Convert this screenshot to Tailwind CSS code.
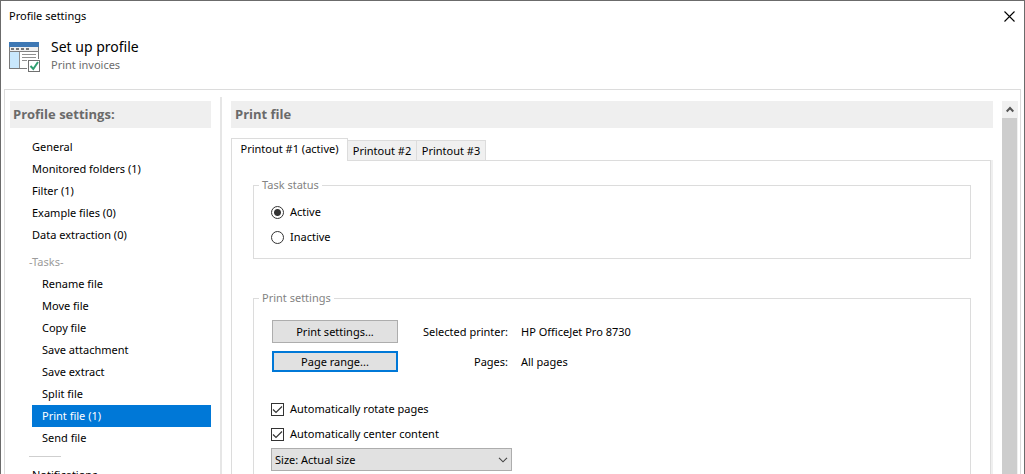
<!DOCTYPE html>
<html lang="en">
<head>
<meta charset="utf-8">
<title>Profile settings</title>
<script src="https://cdn.jsdelivr.net/npm/@tailwindcss/browser@4"></script>
</head>
<body class="h-screen overflow-hidden bg-white font-['Noto_Sans','Open_Sans',sans-serif] text-[11px] leading-4 text-black">
<div class="flex h-full flex-col overflow-hidden border-x border-t border-[#6b6b6b]">
  <header class="shrink-0 pl-2">
    <div class="flex h-[30px] items-center justify-between pr-[5px]">
      <h1>Profile settings</h1>
      <button type="button" aria-label="Close" class="flex h-7 w-5 items-center justify-center">
        <svg class="size-[11px]" viewBox="0 0 11 11" fill="none" stroke="#000" stroke-width="1.1"><path d="M.5.5l10 10M10.5.5l-10 10"/></svg>
      </button>
    </div>
    <div class="flex h-[58px] gap-[10px] pt-[6px]">
      <svg class="mt-[5px] h-[31px] w-8 shrink-0" viewBox="0 0 32 31">
        <rect x=".5" y=".5" width="29" height="26" fill="#fff" stroke="#7a7a7a"/>
        <path fill="#f0f0f0" d="M1 5h28v4H1z"/>
        <path fill="#3e78b4" d="M0 0h30v5H0z"/>
        <path fill="#787878" d="M2 6h3v2H2zM7 6h3v2H7zM12 6h3v2h-3zM17 6h3v2h-3z"/>
        <path fill="#808080" d="M0 9h30v1H0z"/>
        <path fill="#c9e8fd" d="M1 10h9v16H1z"/>
        <path fill="#909090" d="M10 10h1v16h-1zM13 12h14v1H13zM13 15h14v1H13zM13 18h13v1H13z"/>
        <path fill="#fff" d="M18 17h14v14H18z"/>
        <rect x="19.500" y="18.500" width="11" height="11" fill="#fff" stroke="#707070"/>
        <path d="M21.500 24l2.800 3 4.700-7" fill="none" stroke="#2f9e70" stroke-width="2"/>
      </svg>
      <div>
        <h2 class="text-[14px] leading-5">Set up profile</h2>
        <p class="text-[#6d6d6d]">Print invoices</p>
      </div>
    </div>
  </header>

  <div class="mx-[3px] flex min-h-0 flex-1 border-x border-t border-[#dcdcdc] pt-[11px]">
    <nav aria-label="Profile settings" class="ml-[5px] w-[201px] shrink-0">
      <h2 class="mb-2 bg-[#efefef] px-[3px] py-[5px] font-['Open_Sans'] text-[13px] leading-[17px] font-bold text-[#6a6a6a]">Profile settings:</h2>
      <ul class="ml-[22px] leading-[22px]">
        <li><a href="#general" class="block">General</a></li>
        <li><a href="#folders" class="block">Monitored folders (1)</a></li>
        <li><a href="#filter" class="block">Filter (1)</a></li>
        <li><a href="#examples" class="block">Example files (0)</a></li>
        <li><a href="#extraction" class="block">Data extraction (0)</a></li>
        <li class="-ml-[3px] pt-[5px] text-[#9b9b9b]">-Tasks-</li>
        <li><a href="#rename" class="block pl-[10px]">Rename file</a></li>
        <li><a href="#move" class="block pl-[10px]">Move file</a></li>
        <li><a href="#copy" class="block pl-[10px]">Copy file</a></li>
        <li><a href="#attachment" class="block pl-[10px]">Save attachment</a></li>
        <li><a href="#extract" class="block pl-[10px]">Save extract</a></li>
        <li><a href="#split" class="block pl-[10px]">Split file</a></li>
        <li><a href="#print" aria-current="page" class="block bg-[#0078d7] pl-[10px] text-white">Print file (1)</a></li>
        <li><a href="#send" class="block pl-[10px]">Send file</a></li>
        <li aria-hidden="true" class="mt-[7px] mb-[7px] -ml-[3px] h-px w-8 bg-[#cfcfcf]"></li>
        <li><a href="#notifications" class="block">Notifications</a></li>
      </ul>
    </nav>
    <div class="-mt-1 ml-[9px] w-[2px] shrink-0 bg-[#e6e6e6]"></div>

    <main class="ml-[9px] flex min-w-0 flex-1 flex-col">
      <h2 class="shrink-0 bg-[#efefef] px-1 py-[5px] font-['Open_Sans'] text-[13px] leading-[17px] font-bold text-[#6a6a6a]">Print file</h2>
      <div role="tablist" class="mt-[10px] -mb-px flex shrink-0 items-end">
        <button type="button" role="tab" aria-selected="true" class="z-10 h-[23px] w-[117px] border border-b-0 border-[#dcdcdc] bg-white pb-[2px]">Printout #1 (active)</button>
        <button type="button" role="tab" aria-selected="false" class="h-[21px] w-[69px] border border-l-0 border-[#dcdcdc] bg-[#f0f0f0]">Printout #2</button>
        <button type="button" role="tab" aria-selected="false" class="h-[21px] w-[69px] border border-l-0 border-[#dcdcdc] bg-[#f0f0f0]">Printout #3</button>
      </div>
      <div class="flex min-h-0 flex-1 border-r-2 border-[#efefef]">
        <div class="min-w-0 flex-1 border-x border-t border-[#dcdcdc] pt-4 pr-[19px] pl-[21px]">
          <fieldset class="h-[82px] border border-[#dcdcdc] px-[17px]">
            <legend class="-ml-[12px] px-[3px] leading-4 text-[#838383]">Task status</legend>
            <div class="mt-[11px] flex flex-col gap-[9px]">
              <label class="flex items-center gap-[6px]"><input type="radio" name="status" checked class="size-[13px] appearance-none rounded-full border border-[#333] checked:bg-[radial-gradient(circle,#333_3px,#fff_4px)]">Active</label>
              <label class="flex items-center gap-[6px]"><input type="radio" name="status" class="size-[13px] appearance-none rounded-full border border-[#333] checked:bg-[radial-gradient(circle,#333_3px,#fff_4px)]">Inactive</label>
            </div>
          </fieldset>
          <fieldset class="mt-[31px] h-[260px] border border-[#dcdcdc] px-[17px]">
            <legend class="-ml-[12px] px-[3px] leading-4 text-[#838383]">Print settings</legend>
            <div class="mt-[14px] ml-px grid grid-cols-[126px_97px_1fr] items-center gap-x-[13px] gap-y-2">
              <button type="button" class="h-[23px] border border-[#adadad] bg-[#e1e1e1]">Print settings...</button>
              <span class="flex justify-end whitespace-nowrap">Selected printer:</span><span>HP OfficeJet Pro 8730</span>
              <button type="button" class="h-[21px] border-2 border-[#0078d7] bg-[#e1e1e1] leading-none">Page range...</button>
              <span class="text-right">Pages:</span><span>All pages</span>
            </div>
            <div class="mt-[29px] flex flex-col gap-[9px]">
              <label class="flex items-center gap-[6px]"><span class="grid"><input type="checkbox" checked class="peer col-start-1 row-start-1 size-[13px] appearance-none border border-[#333] bg-white"><svg class="pointer-events-none invisible col-start-1 row-start-1 size-[13px] peer-checked:visible" viewBox="0 0 13 13" fill="none" stroke="#333" stroke-width="1.2"><path d="M2 6.500l3 3 6-6"/></svg></span>Automatically rotate pages</label>
              <label class="flex items-center gap-[6px]"><span class="grid"><input type="checkbox" checked class="peer col-start-1 row-start-1 size-[13px] appearance-none border border-[#333] bg-white"><svg class="pointer-events-none invisible col-start-1 row-start-1 size-[13px] peer-checked:visible" viewBox="0 0 13 13" fill="none" stroke="#333" stroke-width="1.2"><path d="M2 6.500l3 3 6-6"/></svg></span>Automatically center content</label>
            </div>
            <div class="mt-[6px] grid w-[241px] items-center">
              <select aria-label="Size" class="col-start-1 row-start-1 h-[23px] appearance-none border border-[#adadad] bg-[#e1e1e1] pl-[3px]"><option>Size: Actual size</option></select>
              <svg class="pointer-events-none col-start-1 row-start-1 mr-1 h-[6px] w-[10px] justify-self-end" viewBox="0 0 10 6" fill="none" stroke="#444" stroke-width="1.1"><path d="M1 .8l4 4 4-4"/></svg>
            </div>
          </fieldset>
        </div>
      </div>
    </main>

    <div class="mr-[2px] ml-[9px] flex w-4 shrink-0 flex-col bg-[#f0f0f0]">
      <button type="button" aria-label="Scroll up" class="flex h-[17px] shrink-0 items-center justify-center">
        <svg class="h-[7px] w-2" viewBox="0 0 8 7" fill="none" stroke="#555" stroke-width="2"><path d="M.7 5.500L4 2l3.300 3.500"/></svg>
      </button>
      <div class="mr-px flex-1 bg-[#cdcdcd]"></div>
    </div>
  </div>
</div>
</body>
</html>
